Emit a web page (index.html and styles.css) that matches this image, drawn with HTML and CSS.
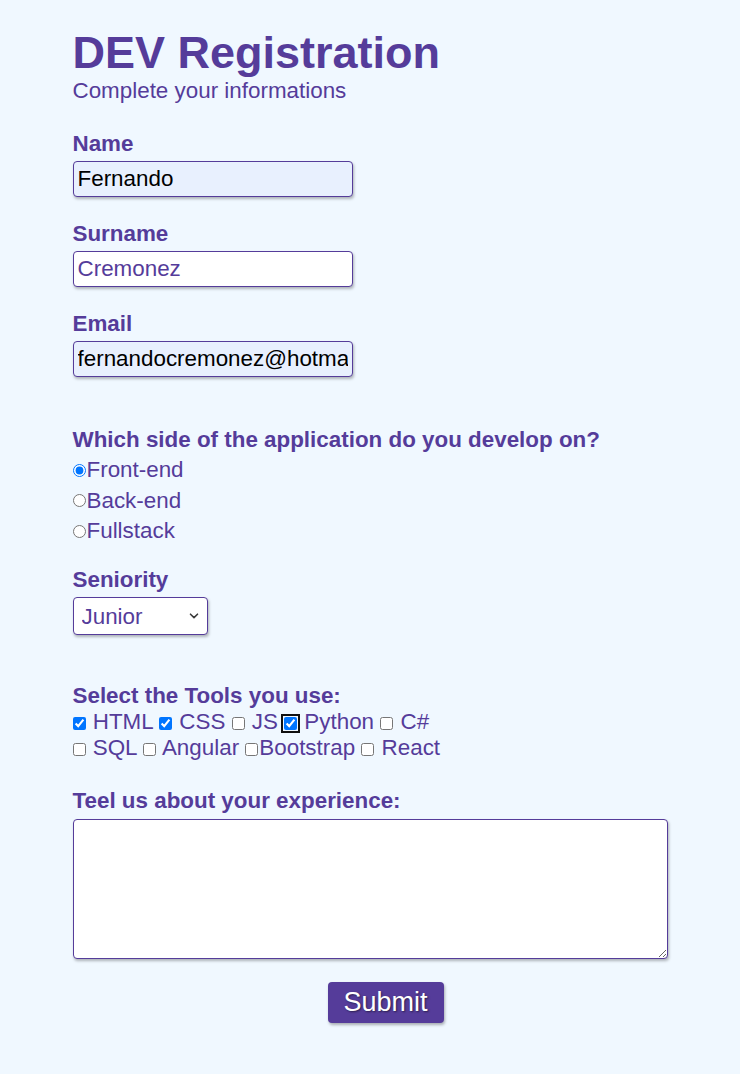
FILE: index.html
```html
<!DOCTYPE html>
<html lang="en">
<head>
<meta charset="utf-8">
<title>DEV Registration</title>
<link rel="stylesheet" href="styles.css">
</head>
<body>
<form class="form">
  <h1 class="title">DEV Registration</h1>
  <p class="subtitle">Complete your informations</p>

  <div class="field first">
    <label class="label" for="name">Name</label>
    <input class="text autofill" id="name" type="text" value="Fernando">
  </div>
  <div class="field">
    <label class="label" for="surname">Surname</label>
    <input class="text" id="surname" type="text" value="Cremonez">
  </div>
  <div class="field">
    <label class="label" for="email">Email</label>
    <input class="text autofill" id="email" type="email" value="fernandocremonez@hotmail.com">
  </div>

  <div class="field big-gap">
    <span class="label">Which side of the application do you develop on?</span>
    <div class="radios">
      <label class="radio-row"><input class="radio" type="radio" name="side" checked>Front-end</label>
      <label class="radio-row"><input class="radio" type="radio" name="side">Back-end</label>
      <label class="radio-row"><input class="radio" type="radio" name="side">Fullstack</label>
    </div>
  </div>

  <div class="field seniority">
    <label class="label" for="seniority">Seniority</label>
    <div class="select-wrap">
      <select class="select" id="seniority">
        <option>Junior</option>
        <option>Pleno</option>
        <option>Senior</option>
      </select>
      <svg class="chev" width="10" height="6" viewBox="0 0 10 6" aria-hidden="true"><path d="M1.5 1.2 L5 4.6 L8.5 1.2" fill="none" stroke="#3b3b3b" stroke-width="1.6" stroke-linecap="round" stroke-linejoin="round"/></svg>
    </div>
  </div>

  <div class="field big-gap2">
    <span class="label">Select the Tools you use:</span>
    <div class="checks">
      <input class="check" type="checkbox" checked> HTML <input class="check" type="checkbox" checked> CSS <input class="check" type="checkbox"> JS <input class="check focus" type="checkbox" checked> Python <input class="check" type="checkbox"> C#<br>
      <input class="check" type="checkbox"> SQL <input class="check" type="checkbox"> Angular <input class="check" type="checkbox">Bootstrap <input class="check" type="checkbox"> React
    </div>
  </div>

  <div class="field exp">
    <label class="label exp-label" for="exp">Teel us about your experience:</label>
    <textarea class="area" id="exp"></textarea>
  </div>

  <div class="actions">
    <button class="submit" type="button">Submit</button>
  </div>
</form>
</body>
</html>
```
FILE: styles.css
```css
html, body {
  margin: 0;
  padding: 0;
}
body {
  background: #f0f8ff;
  color: #553c9a;
  font-family: "Liberation Sans", Arial, sans-serif;
}
.form {
  width: 595px;
  margin: 0 auto;
  padding-top: 28px;
  padding-bottom: 40px;
}
.title {
  margin: 0;
  font-size: 45px;
  line-height: 50px;
  font-weight: bold;
}
.subtitle {
  margin: 0;
  font-size: 22.4px;
  line-height: 25px;
}
.field {
  margin-top: 24px;
}
.field.first {
  margin-top: 28px;
}
.field.big-gap {
  margin-top: 50px;
}
.field.seniority {
  margin-top: 20.5px;
}
.field.big-gap2 {
  margin-top: 48px;
}
.field.exp {
  margin-top: 27px;
}
.label {
  display: block;
  font-size: 22.4px;
  line-height: 25px;
  font-weight: bold;
  margin-bottom: 5px;
}
.label.exp-label {
  margin-bottom: 6px;
}
.text {
  display: block;
  box-sizing: border-box;
  width: 280px;
  height: 36px;
  margin: 0;
  padding: 0 4px;
  border: 1px solid #553c9a;
  border-radius: 4px;
  background: #ffffff;
  color: #553c9a;
  font-family: "Liberation Sans", Arial, sans-serif;
  font-size: 22.4px;
  box-shadow: 1px 2px 3px rgba(0, 0, 0, 0.28);
  outline: none;
}
.text.autofill {
  background: #e8f0fe;
  color: #000000;
}
.radios {
  margin-top: -2px;
}
.radio-row {
  display: flex;
  align-items: center;
  height: 30.5px;
  font-size: 22.4px;
}
.radio {
  width: 13px;
  height: 13px;
  margin: 0 1px 0 0;
}
.select-wrap {
  position: relative;
  width: 135px;
}
.select {
  display: block;
  box-sizing: border-box;
  width: 135px;
  height: 38px;
  margin: 0;
  padding: 0 8px;
  border: 1px solid #553c9a;
  border-radius: 4px;
  background: #ffffff;
  color: #553c9a;
  font-family: "Liberation Sans", Arial, sans-serif;
  font-size: 22.4px;
  box-shadow: 1px 2px 3px rgba(0, 0, 0, 0.28);
  -webkit-appearance: none;
  appearance: none;
}
.chev {
  position: absolute;
  left: 116px;
  top: 16px;
  pointer-events: none;
}
.checks {
  margin-top: -4px;
  font-size: 22.4px;
  line-height: 26px;
}
.check {
  width: 13px;
  height: 13px;
  margin: 0 1px 0 0;
  vertical-align: -1px;
}
.check.focus {
  outline: 2px solid #101010;
  outline-offset: 1px;
  border-radius: 3px;
}
.area {
  display: block;
  box-sizing: border-box;
  width: 595px;
  height: 140px;
  margin: 0;
  border: 1px solid #553c9a;
  border-radius: 4px;
  background: #ffffff;
  box-shadow: 1px 2px 3px rgba(0, 0, 0, 0.28);
  font-family: "Liberation Sans", Arial, sans-serif;
  font-size: 16px;
}
.actions {
  display: flex;
  justify-content: center;
  padding-left: 31px;
  margin-top: 23px;
}
.submit {
  box-sizing: border-box;
  width: 116px;
  height: 41px;
  border: none;
  border-radius: 4px;
  background: #553c9a;
  color: #ffffff;
  font-family: "Liberation Sans", Arial, sans-serif;
  font-size: 27px;
  text-shadow: 1px 1px 2px rgba(0, 0, 0, 0.5);
  box-shadow: 1px 2px 3px rgba(0, 0, 0, 0.3);
  padding: 0;
}
```
